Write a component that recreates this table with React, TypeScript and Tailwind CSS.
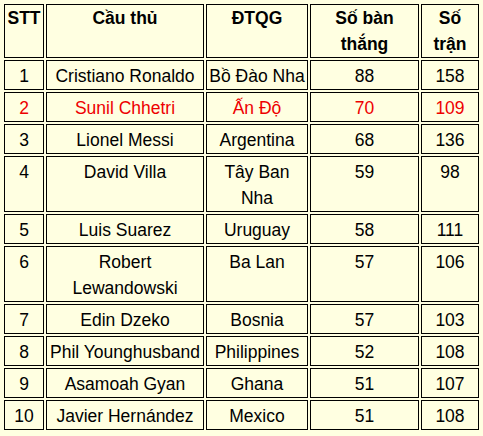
import React from 'react';

interface Row {
    stt: number;
    name: string;
    team: string;
    goals: number;
    caps: number;
    highlight?: boolean;
}

const rows: Row[] = [
    { stt: 1, name: 'Cristiano Ronaldo', team: 'Bồ Đào Nha', goals: 88, caps: 158 },
    { stt: 2, name: 'Sunil Chhetri', team: 'Ấn Độ', goals: 70, caps: 109, highlight: true },
    { stt: 3, name: 'Lionel Messi', team: 'Argentina', goals: 68, caps: 136 },
    { stt: 4, name: 'David Villa', team: 'Tây Ban Nha', goals: 59, caps: 98 },
    { stt: 5, name: 'Luis Suarez', team: 'Uruguay', goals: 58, caps: 111 },
    { stt: 6, name: 'Robert Lewandowski', team: 'Ba Lan', goals: 57, caps: 106 },
    { stt: 7, name: 'Edin Dzeko', team: 'Bosnia', goals: 57, caps: 103 },
    { stt: 8, name: 'Phil Younghusband', team: 'Philippines', goals: 52, caps: 108 },
    { stt: 9, name: 'Asamoah Gyan', team: 'Ghana', goals: 51, caps: 107 },
    { stt: 10, name: 'Javier Hernández', team: 'Mexico', goals: 51, caps: 108 },
];

const th = 'border border-black align-top text-center font-bold px-0 py-0';
const td = 'border border-black align-top text-center px-0 pt-[2px] pb-0';

export default function App() {
    return (
        <div className="w-[483px] h-[436px] bg-[#ffffe1] p-[2px] text-[17.5px] leading-[26px] text-black font-['Liberation_Sans',Arial,sans-serif]">
            <table className="w-[479px] table-fixed border-separate border-spacing-[2px]">
                <thead>
                    <tr>
                        <th className={`${th} w-[40px]`}>STT</th>
                        <th className={`${th} w-[158px]`}>Cầu thủ</th>
                        <th className={`${th} w-[102px]`}>ĐTQG</th>
                        <th className={`${th} w-[109px]`}>Số bàn thắng</th>
                        <th className={`${th} w-[58px]`}>Số trận</th>
                    </tr>
                </thead>
                <tbody>
                    {rows.map((r) => (
                        <tr key={r.stt} className={r.highlight ? 'text-[#ee0000]' : ''}>
                            <td className={td}>{r.stt}</td>
                            <td className={td}>{r.name}</td>
                            <td className={td}>{r.team}</td>
                            <td className={td}>{r.goals}</td>
                            <td className={td}>{r.caps}</td>
                        </tr>
                    ))}
                </tbody>
            </table>
        </div>
    );
}
